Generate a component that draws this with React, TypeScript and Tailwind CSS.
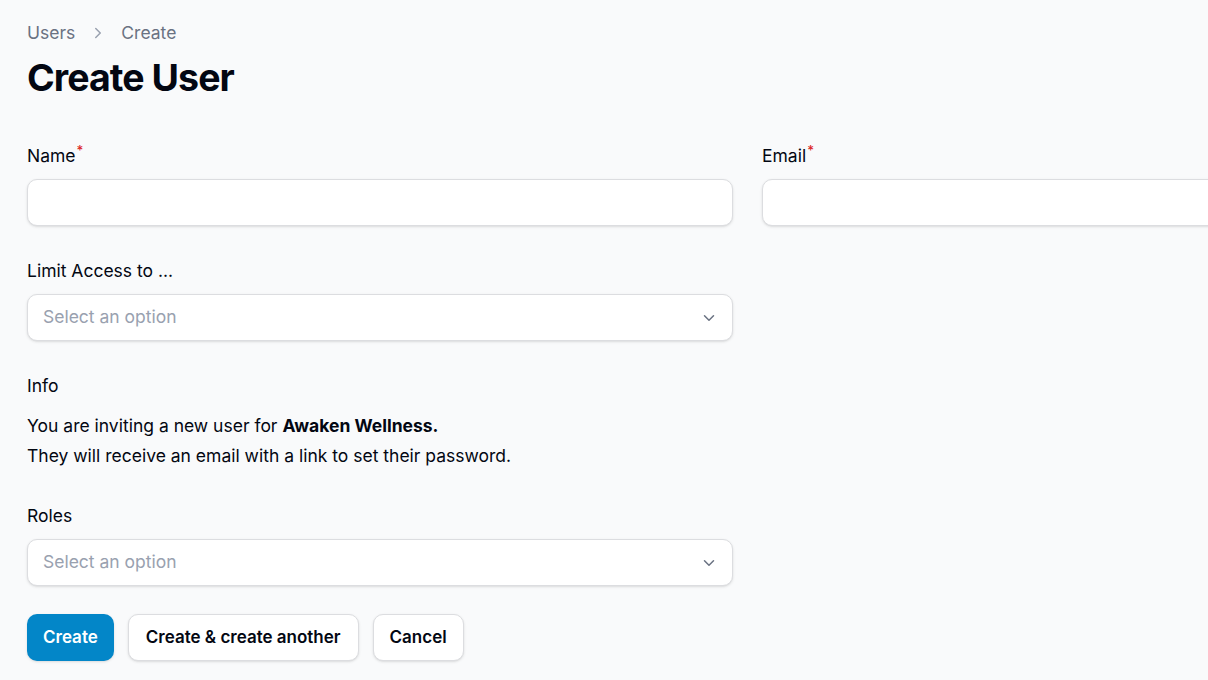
import { ChevronRight, ChevronDown } from 'lucide-react';

function Label({ text, required }: { text: string; required?: boolean }) {
  return (
    <label className="block text-[17.5px] leading-[29px] font-normal text-gray-950">
      {text}
      {required && <sup className="text-[#dc2626] font-medium ml-[1px]">*</sup>}
    </label>
  );
}

function TextInput() {
  return (
    <div className="mt-[9px] h-[47px] rounded-[10px] bg-white border border-[#dcdde0] shadow-sm" />
  );
}

function SelectInput() {
  return (
    <div className="mt-[9px] h-[47px] rounded-[10px] bg-white border border-[#dcdde0] shadow-sm flex items-center justify-between pl-[15px] pr-[14px]">
      <span className="text-[17.5px] text-gray-400">Select an option</span>
      <ChevronDown className="h-[18px] w-[18px] text-gray-500" strokeWidth={2} />
    </div>
  );
}

export default function App() {
  return (
    <div
      className="min-h-screen w-full overflow-hidden bg-gray-50 text-gray-950"
      style={{ fontFamily: 'Inter, "Noto Sans", sans-serif' }}
    >
      <div className="pl-[27px] pt-[18px]">
        {/* Breadcrumbs */}
        <nav className="flex items-center gap-x-[14px] text-[17.5px] leading-[29px] text-gray-500">
          <span>Users</span>
          <ChevronRight className="h-[18px] w-[18px] text-gray-400" strokeWidth={2} />
          <span>Create</span>
        </nav>

        <h1 className="mt-[9px] text-[37.5px] leading-[43px] font-bold tracking-tight text-gray-950">
          Create User
        </h1>

        {/* Form */}
        <div className="mt-[42px] grid grid-cols-[706px_706px] gap-x-[29px] gap-y-[30px]">
          <div>
            <Label text="Name" required />
            <TextInput />
          </div>
          <div>
            <Label text="Email" required />
            <TextInput />
          </div>

          <div className="col-start-1">
            <Label text="Limit Access to ..." />
            <SelectInput />
          </div>

          <div className="col-start-1">
            <Label text="Info" />
            <div className="mt-[11px] text-[17.5px] leading-[30px] text-gray-950">
              <p>
                You are inviting a new user for <strong className="font-bold">Awaken Wellness.</strong>
              </p>
              <p>They will receive an email with a link to set their password.</p>
            </div>
          </div>

          <div className="col-start-1">
            <Label text="Roles" />
            <SelectInput />
          </div>
        </div>

        {/* Actions */}
        <div className="mt-[28px] flex gap-x-[14px]">
          <button className="h-[47px] px-[16px] rounded-[10px] bg-[#0386c8] text-white text-[17px] font-semibold shadow-sm">
            Create
          </button>
          <button className="h-[47px] px-[17px] rounded-[10px] bg-white border border-[#dcdde0] text-gray-950 text-[17px] font-semibold shadow-sm">
            Create &amp; create another
          </button>
          <button className="h-[47px] px-[16px] rounded-[10px] bg-white border border-[#dcdde0] text-gray-950 text-[17px] font-semibold shadow-sm">
            Cancel
          </button>
        </div>
      </div>
    </div>
  );
}
